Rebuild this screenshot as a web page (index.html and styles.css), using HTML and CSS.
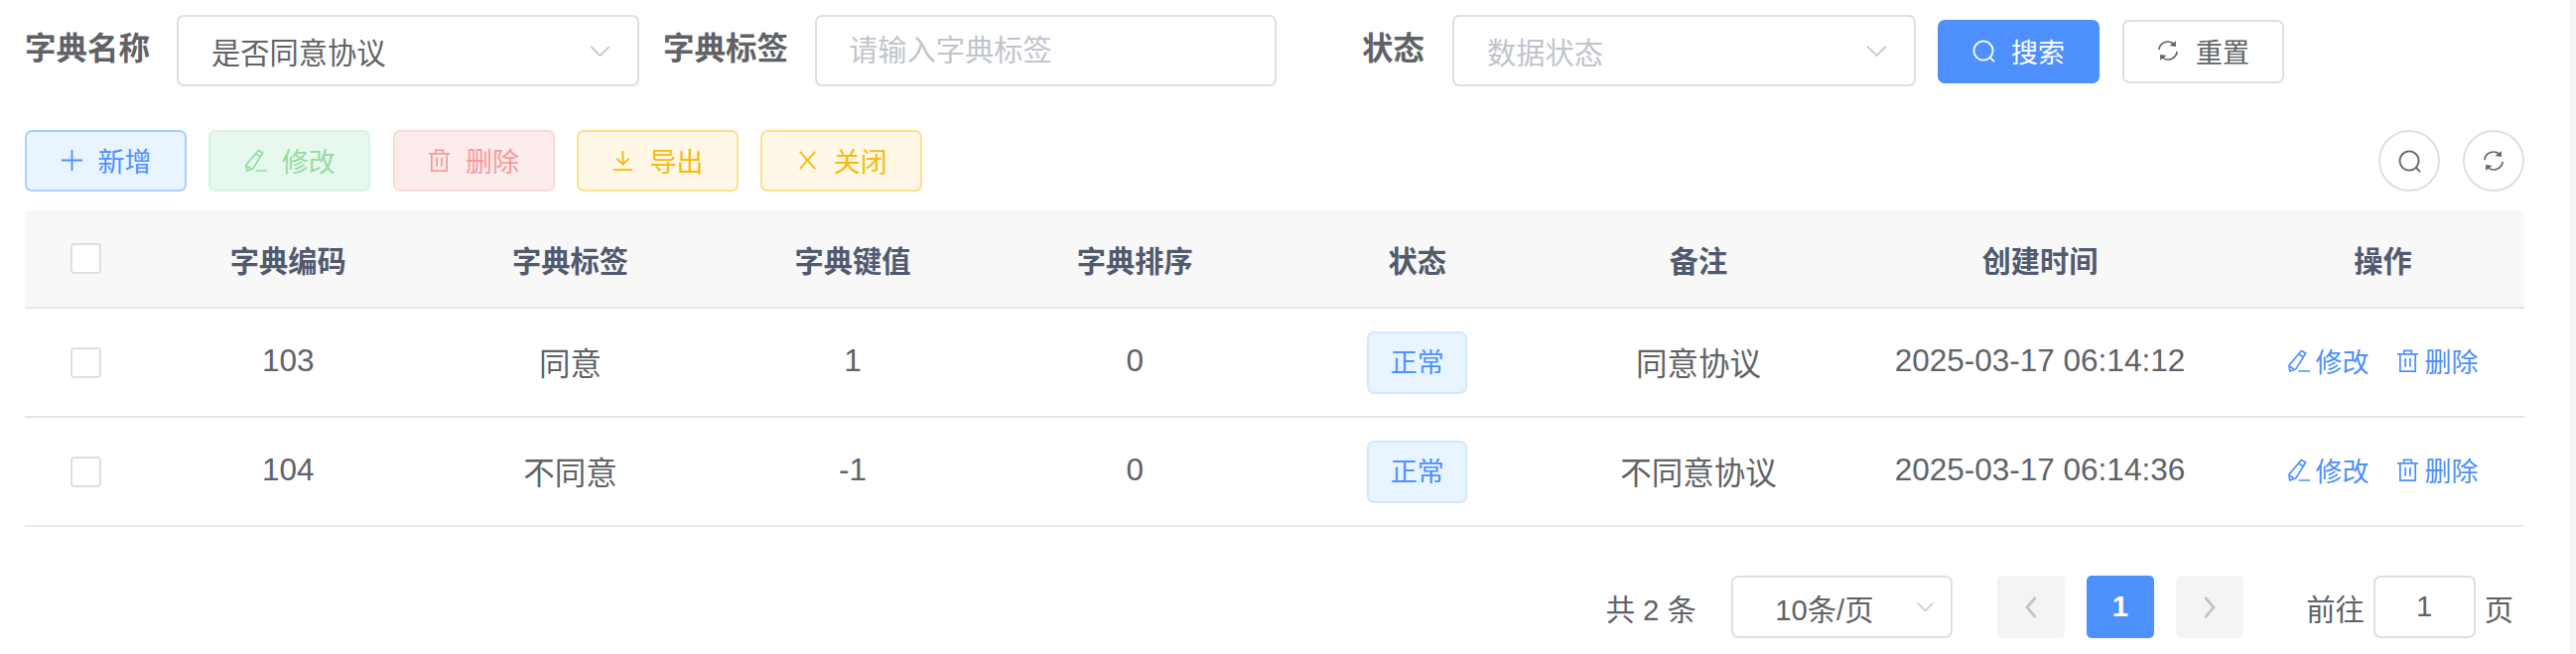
FILE: index.html
```html
<!DOCTYPE html>
<html lang="zh-CN">
<head>
    <meta charset="UTF-8">
    <meta name="viewport" content="width=device-width, initial-scale=1.0">
    <title>字典数据</title>
    <link rel="stylesheet" href="styles.css">
</head>
<body>
    <svg class="sprite" xmlns="http://www.w3.org/2000/svg">
        <symbol id="i-search" viewBox="0 0 24 24">
            <circle cx="11.5" cy="11.5" r="10" fill="none" stroke="currentColor" stroke-width="1.9"/>
            <path d="M18.6 18.6 23 23" fill="none" stroke="currentColor" stroke-width="1.9"/>
        </symbol>
        <symbol id="i-refresh" viewBox="0 0 24 24">
            <path d="M2 11A10 10 0 0 1 19 5.2M22 13A10 10 0 0 1 5 18.8" fill="none" stroke="currentColor" stroke-width="1.8"/>
            <path d="M13.5 6.6 20.6 7.6 20.6 1.4ZM10.5 17.4 3.4 16.4 3.4 22.6Z" fill="currentColor"/>
        </symbol>
        <symbol id="i-plus" viewBox="0 0 24 24">
            <path d="M12 1V23M1 12H23" fill="none" stroke="currentColor" stroke-width="1.9"/>
        </symbol>
        <symbol id="i-edit" viewBox="0 0 24 24">
            <path d="M15 1.5 19.5 4.2 9 21 2.8 23 2 16.8ZM12.6 5.4 17.2 8.1M2.6 18 7 20.6M12 23H24" fill="none" stroke="currentColor" stroke-width="1.7"/>
        </symbol>
        <symbol id="i-trash" viewBox="0 0 24 24">
            <path d="M1 5H23M8 5V1.5H16V5M4 5V23H20V5M9.5 9.5V18.5M14.5 9.5V18.5" fill="none" stroke="currentColor" stroke-width="1.8"/>
        </symbol>
        <symbol id="i-download" viewBox="0 0 24 24">
            <path d="M12 2V16M5.5 10 12 16.5 18.5 10M2 22H22" fill="none" stroke="currentColor" stroke-width="1.9"/>
        </symbol>
        <symbol id="i-close" viewBox="0 0 24 24">
            <path d="M4 3 20 21M20 3 4 21" fill="none" stroke="currentColor" stroke-width="1.9"/>
        </symbol>
        <symbol id="i-down" viewBox="0 0 24 14">
            <path d="M2 2 12 12 22 2" fill="none" stroke="currentColor" stroke-width="1.8"/>
        </symbol>
        <symbol id="i-left" viewBox="0 0 14 24">
            <path d="M11.5 2 3 12 11.5 22" fill="none" stroke="currentColor" stroke-width="2.8"/>
        </symbol>
        <symbol id="i-right" viewBox="0 0 14 24">
            <path d="M2.5 2 11 12 2.5 22" fill="none" stroke="currentColor" stroke-width="2.8"/>
        </symbol>
    </svg>

    <div class="container">
        <form class="search-form">
            <div class="form-item">
                <label class="form-label">字典名称</label>
                <div class="select">
                    <span class="select-value">是否同意协议</span>
                    <svg class="select-arrow"><use href="#i-down"/></svg>
                </div>
            </div>
            <div class="form-item">
                <label class="form-label" for="dictLabel">字典标签</label>
                <input class="text-input" id="dictLabel" type="text" placeholder="请输入字典标签">
            </div>
            <div class="form-item form-item-status">
                <label class="form-label">状态</label>
                <div class="select select-status">
                    <span class="select-value placeholder">数据状态</span>
                    <svg class="select-arrow"><use href="#i-down"/></svg>
                </div>
            </div>
            <button class="btn btn-search" type="button"><svg class="icon"><use href="#i-search"/></svg>搜索</button>
            <button class="btn btn-reset" type="button"><svg class="icon icon-sm"><use href="#i-refresh"/></svg>重置</button>
        </form>

        <div class="toolbar">
            <button class="btn tool-btn tool-primary" type="button"><svg class="icon"><use href="#i-plus"/></svg>新增</button>
            <button class="btn tool-btn tool-success" type="button"><svg class="icon"><use href="#i-edit"/></svg>修改</button>
            <button class="btn tool-btn tool-danger" type="button"><svg class="icon"><use href="#i-trash"/></svg>删除</button>
            <button class="btn tool-btn tool-warning" type="button"><svg class="icon"><use href="#i-download"/></svg>导出</button>
            <button class="btn tool-btn tool-warning" type="button"><svg class="icon"><use href="#i-close"/></svg>关闭</button>
            <div class="toolbar-right">
                <button class="circle-btn" type="button"><svg class="icon"><use href="#i-search"/></svg></button>
                <button class="circle-btn" type="button"><svg class="icon icon-sm"><use href="#i-refresh"/></svg></button>
            </div>
        </div>

        <table class="data-table">
            <colgroup>
                <col class="col-check">
                <col class="col-normal">
                <col class="col-normal">
                <col class="col-normal">
                <col class="col-normal">
                <col class="col-normal">
                <col class="col-remark">
                <col class="col-time">
                <col class="col-action">
            </colgroup>
            <thead>
                <tr>
                    <th><input class="checkbox" type="checkbox"></th>
                    <th>字典编码</th>
                    <th>字典标签</th>
                    <th>字典键值</th>
                    <th>字典排序</th>
                    <th>状态</th>
                    <th>备注</th>
                    <th>创建时间</th>
                    <th>操作</th>
                </tr>
            </thead>
            <tbody>
                <tr>
                    <td class="cell-box"><input class="checkbox" type="checkbox"></td>
                    <td>103</td>
                    <td>同意</td>
                    <td>1</td>
                    <td>0</td>
                    <td class="cell-box"><span class="tag">正常</span></td>
                    <td>同意协议</td>
                    <td>2025-03-17 06:14:12</td>
                    <td>
                        <div class="row-actions">
                            <a class="link"><svg class="icon"><use href="#i-edit"/></svg>修改</a>
                            <a class="link"><svg class="icon"><use href="#i-trash"/></svg>删除</a>
                        </div>
                    </td>
                </tr>
                <tr>
                    <td class="cell-box"><input class="checkbox" type="checkbox"></td>
                    <td>104</td>
                    <td>不同意</td>
                    <td>-1</td>
                    <td>0</td>
                    <td class="cell-box"><span class="tag">正常</span></td>
                    <td>不同意协议</td>
                    <td>2025-03-17 06:14:36</td>
                    <td>
                        <div class="row-actions">
                            <a class="link"><svg class="icon"><use href="#i-edit"/></svg>修改</a>
                            <a class="link"><svg class="icon"><use href="#i-trash"/></svg>删除</a>
                        </div>
                    </td>
                </tr>
            </tbody>
        </table>

        <div class="pagination">
            <span class="total">共 2 条</span>
            <div class="select select-size">
                <span class="select-value">10条/页</span>
                <svg class="select-arrow"><use href="#i-down"/></svg>
            </div>
            <button class="page-btn" type="button"><svg class="page-arrow"><use href="#i-left"/></svg></button>
            <button class="page-btn active" type="button">1</button>
            <button class="page-btn" type="button"><svg class="page-arrow"><use href="#i-right"/></svg></button>
            <span class="jump">前往<input class="jump-input" type="text" value="1">页</span>
        </div>
    </div>
    <div class="scroll-strip"></div>
</body>
</html>
```

FILE: styles.css
```css
* {
    box-sizing: border-box;
    margin: 0;
    padding: 0;
}

html, body {
    height: 100%;
    overflow: hidden;
}

body {
    display: flex;
    font-family: "Liberation Sans", "Noto Sans CJK SC", sans-serif;
    color: #606266;
    background-color: #fff;
}

button, input {
    font-family: inherit;
}

.sprite {
    display: none;
}

.container {
    flex: 1;
    padding: 15px 0 0 25px;
}

.scroll-strip {
    width: 6px;
    background-color: #f5f5f5;
}

/* search form */
.search-form {
    display: flex;
    align-items: flex-start;
    height: 72px;
}

.form-item {
    display: flex;
    margin-right: 24px;
}

.form-item-status {
    margin-right: 22px;
}

.form-label {
    width: 153px;
    height: 72px;
    padding-right: 28px;
    line-height: 68px;
    text-align: right;
    white-space: nowrap;
    font-size: 31.5px;
    font-weight: 700;
}

.select {
    position: relative;
    display: flex;
    align-items: center;
    width: 466px;
    height: 72px;
    padding-left: 33px;
    font-size: 29.25px;
    border: 2px solid #dcdfe6;
    border-radius: 7px;
    background-color: #fff;
}

.select-status {
    width: 467px;
}

.select-value.placeholder {
    color: #c0c4cc;
}

.select-arrow {
    position: absolute;
    top: 50%;
    right: 26px;
    width: 23px;
    height: 13px;
    margin-top: -6px;
    color: #c0c4cc;
}

.text-input {
    width: 465px;
    height: 72px;
    padding: 0 32px;
    font-size: 29.25px;
    color: #606266;
    border: 2px solid #dcdfe6;
    border-radius: 7px;
    outline: none;
}

.text-input::placeholder {
    color: #c0c4cc;
}

/* buttons */
.btn {
    display: inline-flex;
    align-items: center;
    justify-content: center;
    gap: 15px;
    width: 163px;
    font-size: 27px;
    border: 2px solid transparent;
    border-radius: 7px;
    cursor: pointer;
}

.icon {
    width: 23px;
    height: 23px;
    flex-shrink: 0;
}

.icon-sm {
    width: 22px;
    height: 22px;
}

.btn-search, .btn-reset {
    height: 64px;
    margin-top: 5px;
    padding-bottom: 2px;
}

.btn-search {
    gap: 16px;
    color: #fff;
    background-color: #4d90fe;
    border-color: #4d90fe;
}

.btn-reset {
    gap: 17px;
    margin-left: 23px;
    color: #606266;
    background-color: #fff;
    border-color: #dcdfe6;
}

/* toolbar */
.toolbar {
    display: flex;
    align-items: center;
    gap: 22.3px;
    width: 2518px;
    height: 62px;
    margin-top: 44px;
}

.tool-btn {
    height: 62px;
    padding-bottom: 2px;
}

.tool-primary {
    color: #4d90fe;
    background-color: #e8f4ff;
    border-color: #a8d0ff;
}

.tool-success {
    color: #93dd9f;
    background-color: #e7f8ee;
    border-color: #d6f5e2;
}

.tool-danger {
    color: #f49a9c;
    background-color: #fdecec;
    border-color: #fbd9d9;
}

.tool-warning {
    color: #f8b80f;
    background-color: #fff8e6;
    border-color: #fbe08e;
}

.toolbar-right {
    display: flex;
    gap: 23px;
    margin-left: auto;
}

.circle-btn {
    display: flex;
    align-items: center;
    justify-content: center;
    width: 62px;
    height: 62px;
    color: #606266;
    background-color: #fff;
    border: 2px solid #dcdfe6;
    border-radius: 50%;
}

/* table */
.data-table {
    width: 2518px;
    margin-top: 19px;
    table-layout: fixed;
    border-collapse: separate;
    border-spacing: 0;
}

.col-check {
    width: 123px;
}

.col-normal {
    width: 284.4px;
}

.col-remark {
    width: 282px;
}

.col-time {
    width: 406px;
}

.col-action {
    width: 285px;
}

.data-table th,
.data-table td {
    text-align: center;
    vertical-align: middle;
}

.data-table th {
    height: 99px;
    font-size: 29.25px;
    font-weight: 700;
    color: #515a6e;
    background-color: #f8f8f9;
    border-bottom: 2px solid #dfe6ec;
}

.data-table td {
    height: 110px;
    padding-bottom: 3px;
    font-size: 31.5px;
    border-bottom: 2px solid #dfe6ec;
}

.data-table td.cell-box {
    padding-bottom: 0;
}

.data-table tbody tr:last-child td {
    border-bottom-color: #e6ebf5;
}

.checkbox {
    display: block;
    width: 31px;
    height: 31px;
    margin: 0 0 0 46px;
    appearance: none;
    background-color: #fff;
    border: 2px solid #dcdfe6;
    border-radius: 4px;
}

.tag {
    display: inline-flex;
    align-items: center;
    justify-content: center;
    width: 101px;
    height: 63px;
    padding-bottom: 3px;
    font-size: 27px;
    color: #4d90fe;
    background-color: #e8f4ff;
    border: 2px solid #d1e9ff;
    border-radius: 7px;
}

.row-actions {
    display: flex;
    justify-content: center;
    gap: 28px;
}

.link {
    display: inline-flex;
    align-items: center;
    gap: 5px;
    font-size: 27px;
    color: #4d90fe;
    cursor: pointer;
}

/* pagination */
.pagination {
    display: flex;
    align-items: center;
    width: 2507px;
    height: 63px;
    margin-top: 49px;
    justify-content: flex-end;
    font-size: 29.25px;
}

.total {
    margin-right: 35.5px;
}

.select-size {
    width: 223px;
    height: 63px;
    padding-left: 42px;
    margin-right: 45px;
}

.select-size .select-arrow {
    right: 16px;
    width: 19px;
    height: 11px;
}

.page-btn {
    display: flex;
    align-items: center;
    justify-content: center;
    width: 67.5px;
    height: 63px;
    margin-right: 22.5px;
    font-size: 29.25px;
    font-weight: 700;
    color: #c0c4cc;
    background-color: #f4f4f5;
    border: none;
    border-radius: 5px;
}

.page-btn.active {
    color: #fff;
    background-color: #4d90fe;
}

.page-btn:last-of-type {
    margin-right: 63.5px;
}

.page-arrow {
    width: 14px;
    height: 24px;
}

.jump {
    display: flex;
    align-items: center;
}

.jump-input {
    width: 103px;
    height: 63px;
    margin: 0 9px;
    font-size: 29.25px;
    text-align: center;
    color: #606266;
    border: 2px solid #dcdfe6;
    border-radius: 7px;
    outline: none;
}
```
